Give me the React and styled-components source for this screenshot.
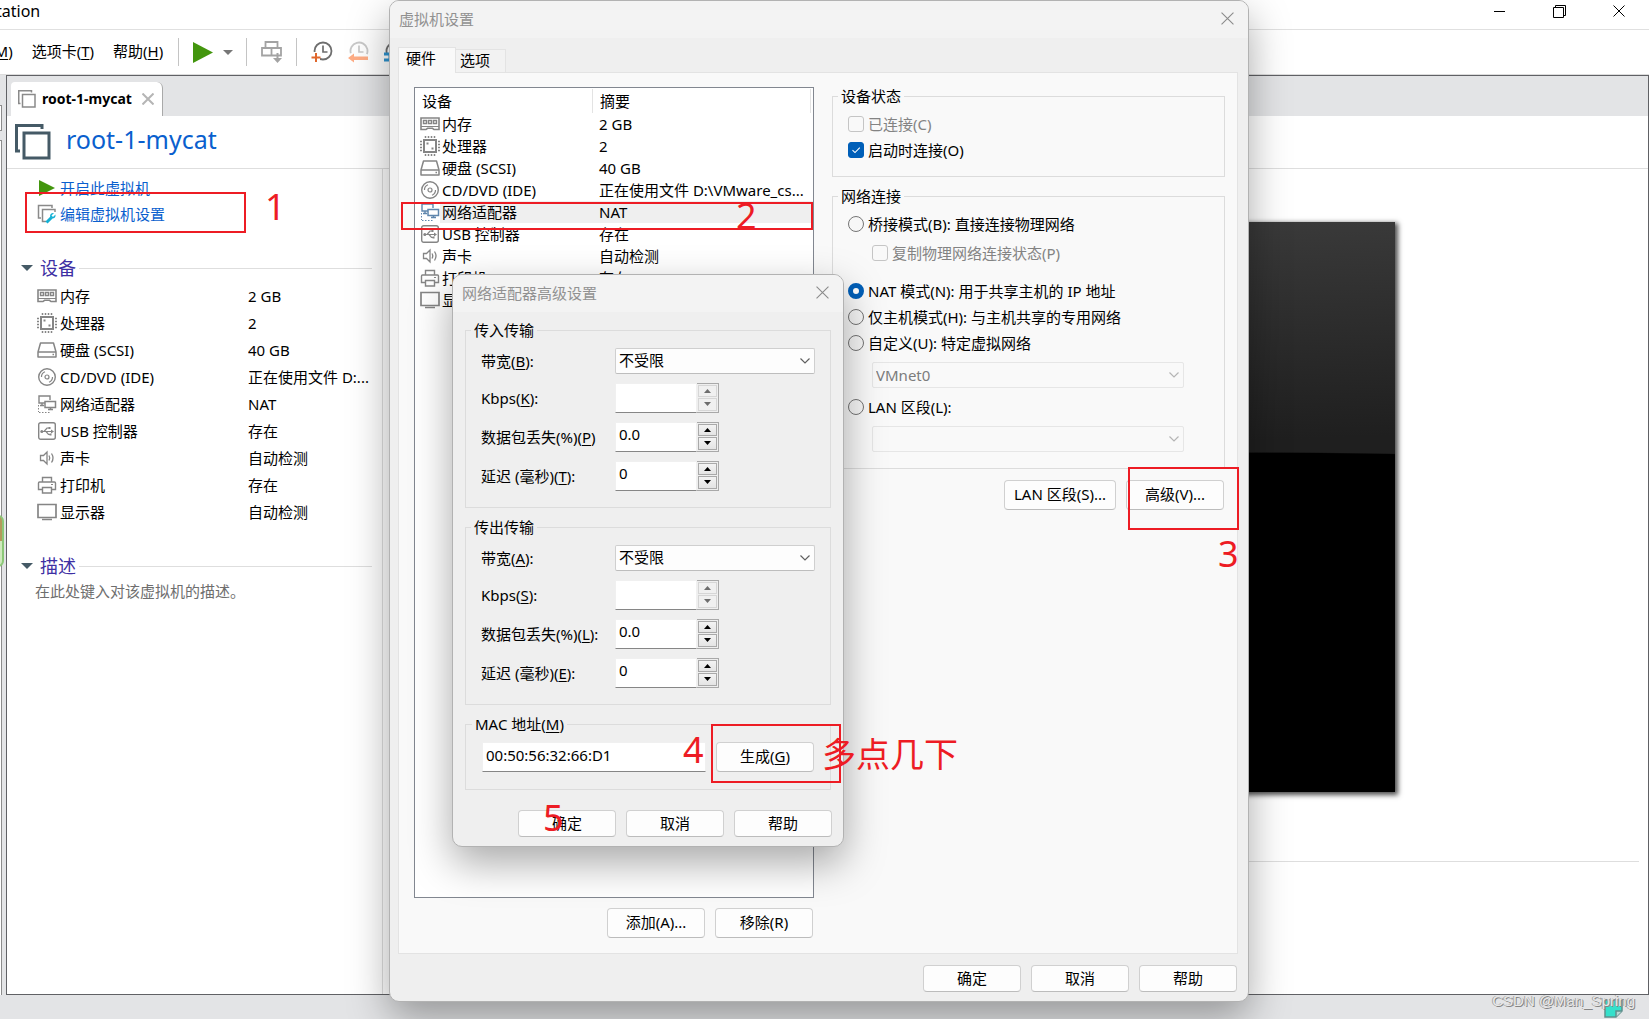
import React from 'react';
import styled, { createGlobalStyle, css } from 'styled-components';

const GlobalStyle = createGlobalStyle`
  * {
    box-sizing: border-box;
  }

  body {
    margin: 0;
    overflow: hidden;
    color: #000;
    font-family: 'Noto Sans', 'Noto Sans CJK SC', sans-serif;
    font-size: 15px;
    line-height: 20px;
  }

  button,
  input,
  select {
    font: inherit;
    color: inherit;
    margin: 0;
  }

  u {
    text-underline-offset: 2px;
  }
`;

/* ---------- main window ---------- */

const Desktop = styled.div`
  position: relative;
  display: flex;
  flex-direction: column;
  height: 100vh;
  background: #e3e4e6;
`;

const TitleBar = styled.header`
  display: flex;
  justify-content: space-between;
  align-items: flex-start;
  height: 30px;
  background: #fff;
  border-bottom: 1px solid #e0e0e0;
`;

const AppTitle = styled.h1`
  margin: 1px 0 0 -4px;
  font-size: 16px;
  font-weight: 400;
  line-height: 20px;
`;

const WindowControls = styled.div`
  display: flex;
  gap: 36px;
  padding: 0 18px 0 0;
`;

const BareButton = styled.button`
  display: flex;
  align-items: center;
  justify-content: center;
  padding: 0;
  border: 0;
  background: transparent;
`;

const WindowButton = styled(BareButton)`
  width: 24px;
  height: 22px;
`;

const MenuBar = styled.nav`
  display: flex;
  align-items: center;
  height: 45px;
  background: #fff;
  border-bottom: 1px solid #dcdcdc;
`;

const MenuItems = styled.div`
  display: flex;
  gap: 19px;
  margin-left: -10px;
  padding: 0 15px 2px 0;
`;

const MenuItem = styled.button`
  padding: 0;
  border: 0;
  background: transparent;
  white-space: nowrap;
`;

const ToolSeparator = styled.span`
  width: 1px;
  height: 28px;
  background: #c4c4c4;
`;

const ToolGroup = styled.div`
  display: flex;
  align-items: center;
  gap: ${({ $gap }) => $gap}px;
  padding: 0 13px 0 14px;
`;

const Workspace = styled.div`
  flex: 1;
  display: flex;
  min-height: 0;
`;

const Gutter = styled.aside`
  position: relative;
  display: flex;
  flex-direction: column;
  width: 6px;
`;

const GutterSlice = styled.div`
  width: 2px;
  height: ${({ $fill }) => ($fill ? 'auto' : '26px')};
  flex: ${({ $fill }) => ($fill ? 1 : 'none')};
  margin-top: ${({ $fill }) => ($fill ? 9 : 30)}px;
  background: #fff;
  border: 1px solid #8c8c8c;
  border-left: 0;
  border-bottom-width: ${({ $fill }) => ($fill ? 0 : 1)}px;
`;

const GutterBadge = styled.div`
  position: absolute;
  left: -8px;
  top: 440px;
  width: 12px;
  height: 52px;
  border: 2px solid #8cc878;
  border-radius: 6px;
  background: linear-gradient(#b39a5c 0 50%, #cfe9bd 50% 100%);
`;

const Panel = styled.main`
  flex: 1;
  display: flex;
  flex-direction: column;
  min-width: 0;
  background: #fff;
  border: 1px solid #606165;
`;

const TabStrip = styled.div`
  display: flex;
  align-items: flex-end;
  height: 40px;
  padding-left: 4px;
  background: #e3e4e6;
`;

const VmTab = styled.div`
  display: flex;
  align-items: center;
  height: 34px;
  padding: 0 8px 0 7px;
  gap: 6px;
  background: #fff;
  border-right: 1px solid #a9a9a9;
  border-radius: 4px 6px 0 0;
  font-size: 14px;
  font-weight: 700;
`;

const TabClose = styled(BareButton)`
  margin-left: 4px;
`;

const VmHeader = styled.div`
  display: flex;
  align-items: center;
  gap: 15px;
  height: 53px;
  padding-left: 8px;
  border-bottom: 1px solid #dedede;
`;

const VmName = styled.h2`
  margin: 0;
  padding-bottom: 6px;
  color: #0a5fce;
  font-size: 25px;
  font-weight: 400;
  line-height: 32px;
`;

const PanelBody = styled.div`
  flex: 1;
  display: flex;
  min-height: 0;
`;

const Summary = styled.section`
  width: 376px;
  padding: 6px 10px 0 14px;
  border-right: 1px solid #dedede;
`;

const Command = styled.a`
  display: flex;
  align-items: center;
  gap: 3px;
  height: 26px;
  padding-left: 16px;
  color: #0a5fce;
  text-decoration: none;
`;

const SectionTitle = styled.h3`
  display: flex;
  align-items: center;
  gap: 7px;
  margin: 0;
  color: #3d2fa3;
  font-size: 18px;
  font-weight: 400;
  line-height: 28px;

  &::after {
    content: '';
    flex: 1;
    height: 1px;
    margin-left: -4px;
    background: #dedede;
  }
`;

const Section = styled.div`
  margin-top: 27px;
`;

const VmTable = styled.table`
  width: 100%;
  border-collapse: collapse;
  table-layout: fixed;

  th,
  td {
    height: 27px;
    padding: 0;
    overflow: hidden;
    font-weight: 400;
    text-align: left;
    text-overflow: ellipsis;
    white-space: nowrap;
  }

  th {
    width: 227px;
    padding-left: 16px;
  }
`;

const DeviceName = styled.span`
  display: flex;
  align-items: center;
  gap: ${({ $gap }) => $gap}px;

  svg {
    flex: none;
  }
`;

const Description = styled.p`
  margin: 1px 0 0 14px;
  color: #6e6e6e;
  line-height: 20px;
`;

const PreviewPane = styled.section`
  flex: 1;
  display: flex;
  flex-direction: column;
  padding: 53px 9px 0 10px;
`;

const Preview = styled.div`
  height: 570px;
  margin: 0 244px 0 242px;
  background: radial-gradient(ellipse 900px 120px at 82% 350px, #000 99%, transparent 100%),
    linear-gradient(transparent 300px, #000 300px),
    linear-gradient(178deg, #3c3c3c, #1f1f1f 240px);
  box-shadow: 2px 2px 5px 1px rgba(0, 0, 0, 0.7);
`;

const PreviewRule = styled.hr`
  width: 100%;
  margin: 69px 0 0;
  border: 0;
  border-top: 1px solid #dedede;
`;

const StatusBar = styled.footer`
  display: flex;
  justify-content: flex-end;
  align-items: flex-start;
  height: 24px;
  padding: 4px 26px 0 0;
`;

/* ---------- dialogs ---------- */

const Dialog = styled.section`
  position: absolute;
  left: ${({ $left }) => $left}px;
  top: ${({ $top }) => $top}px;
  display: flex;
  flex-direction: column;
  width: ${({ $width }) => $width}px;
  background: #efefef;
  border: 1px solid #b2b2b2;
  border-radius: 10px;
  box-shadow: 0 16px 40px rgba(0, 0, 0, 0.34);
`;

const SettingsDialog = styled(Dialog)`
  bottom: 17px;
`;

const DialogTitle = styled.header`
  display: flex;
  align-items: center;
  justify-content: space-between;
  height: 37px;
  padding: 0 14px 2px 9px;
  background: #f3f3f3;
  border-radius: 9px 9px 0 0;
  color: #919191;

  h2 {
    margin: 0;
    font-size: 15px;
    font-weight: 400;
  }
`;

const DialogTabs = styled.div`
  display: flex;
  align-items: flex-end;
  padding: 9px 0 0 8px;
`;

const DialogTab = styled.button`
  display: flex;
  border: 1px solid #e3e3e3;
  border-bottom: 0;

  ${({ $active }) =>
    $active
      ? css`
          position: relative;
          height: 26px;
          width: 58px;
          margin-bottom: -1px;
          padding: 0 0 0 7px;
          background: #f9f9f9;
        `
      : css`
          height: 23px;
          width: 50px;
          padding: 0 0 0 4px;
          background: #f2f2f2;
          border-left: 0;
        `}
`;

const DialogPane = styled.div`
  flex: 1;
  display: flex;
  gap: 18px;
  min-height: 0;
  margin: 0 10px 0 8px;
  padding: 14px 12px 15px 15px;
  background: #f9f9f9;
  border: 1px solid #e3e3e3;
`;

const Hardware = styled.div`
  display: flex;
  flex-direction: column;
  width: 400px;
`;

const ListBox = styled.div`
  flex: 1;
  overflow: hidden;
  background: #fff;
  border: 1px solid #828790;
`;

const HardwareTable = styled.table`
  width: 100%;
  border-collapse: collapse;
  table-layout: fixed;

  th {
    height: 25px;
    padding: 0 0 0 7px;
    font-weight: 400;
    text-align: left;
    background: linear-gradient(#e3e3e3, #e3e3e3) no-repeat right 2px top 1px / 1px 24px;
  }

  th:first-child {
    width: 178px;
    background-position: right top 1px;
  }

  td {
    height: 22px;
    padding: 0 0 0 5px;
    overflow: hidden;
    text-overflow: ellipsis;
    white-space: nowrap;
  }

  td + td {
    padding: 0 9px 0 6px;
  }
`;

const HardwareRow = styled.tr`
  ${({ $selected }) =>
    $selected &&
    css`
      svg {
        color: #5f86ad;
      }

      td {
        background: linear-gradient(#efefef, #efefef) no-repeat 0 0 / 100% 100%;
      }

      td:first-child {
        background-position: 25px 0;
      }
    `}
`;

const ButtonRow = styled.div`
  display: flex;
  justify-content: flex-end;
  gap: 10px;
  padding: ${({ $pad }) => $pad};
`;

const Button = styled.button`
  min-width: 98px;
  height: ${({ $tall }) => ($tall ? 30 : 27)}px;
  padding: 0 9px 2px;
  background: #fdfdfd;
  border: 1px solid #d0d0d0;
  border-bottom-color: #bcbcbc;
  border-radius: 4px;
  white-space: nowrap;
`;

const Options = styled.div`
  flex: 1;
  display: flex;
  flex-direction: column;
`;

const Group = styled.fieldset`
  min-width: 0;
  margin: 0;
  padding: ${({ $pad }) => $pad};
  border: 1px solid #dcdcdc;

  legend {
    margin-left: -10px;
    padding: 0 3px;
    line-height: 18px;
  }

  & + & {
    margin-top: 10px;
  }
`;

const Choice = styled.label`
  display: flex;
  align-items: center;
  gap: 4px;
  height: 26px;
  margin: ${({ $margin }) => $margin || 0};
  color: ${({ $disabled }) => ($disabled ? '#838383' : '#000')};
  white-space: nowrap;
`;

const Check = styled.input`
  appearance: none;
  width: 16px;
  height: 16px;
  border: 1px solid #8a8a8a;
  border-radius: 3px;
  background: #f9f9f9;

  &:disabled {
    border-color: #c5c5c5;
  }

  &:checked {
    border-color: #005fb8;
    background: #005fb8
      url("data:image/svg+xml,%3Csvg xmlns='http://www.w3.org/2000/svg' viewBox='0 0 14 14'%3E%3Cpath d='M3.5 7.2 6 9.6l4.8-4.9' fill='none' stroke='%23fff' stroke-width='1.1'/%3E%3C/svg%3E");
  }
`;

const Radio = styled.input`
  appearance: none;
  width: 16px;
  height: 16px;
  border: 1px solid #757575;
  border-radius: 50%;
  background: #f7f7f7;

  &:checked {
    border: 5px solid #005fb8;
    background: #fff;
  }
`;

const SelectBox = styled.span`
  display: grid;
  align-items: center;
  width: ${({ $width }) => $width}px;
  height: 26px;
  margin-left: ${({ $indent }) => $indent || 0}px;

  select,
  svg {
    grid-area: 1 / 1;
  }

  svg {
    justify-self: end;
    margin-right: 5px;
    color: #606060;
    pointer-events: none;
  }

  select {
    appearance: none;
    width: 100%;
    height: 26px;
    padding: 0 3px 1px;
    background: #fdfdfd;
    border: 1px solid #cfcfcf;
    border-bottom-color: #bdbdbd;
    border-radius: 2px;
  }

  select:disabled {
    background: #f9f9f9;
    border-color: #e6e6e6;
    color: #7c7c7c;
    opacity: 1;
  }

  select:disabled + svg {
    color: #b5b5b5;
  }
`;

const Field = styled.div`
  display: grid;
  grid-template-columns: 134px auto;
  justify-content: start;
  align-items: center;
  height: ${({ $short }) => ($short ? 35 : 39)}px;

  label {
    white-space: nowrap;
  }
`;

const SpinBox = styled.span`
  display: flex;
  width: 104px;
  height: 30px;
`;

const TextInput = styled.input`
  flex: 1;
  min-width: 0;
  height: 30px;
  padding: 0 3px 5px;
  background: #fff;
  border: 1px solid #f0f0f0;
  border-bottom-color: #868686;
  outline: 0;
`;

const Arrows = styled.span`
  display: flex;
  flex-direction: column;
  gap: 1px;
  width: 22px;
  height: 30px;
  padding: 1px;
  border: 1px solid #a9a9a9;
  border-left: 0;
  background: #efefef;
`;

const ArrowButton = styled(BareButton)`
  flex: 1;
  border: 1px solid #a9a9a9;
  background: linear-gradient(#f3f3f3, #e4e4e4);

  &:disabled {
    border-color: #d6d6d6;
    background: #f0f0f0;
    color: #6d6d6d;
  }
`;

const MacRow = styled.div`
  display: flex;
  gap: 10px;
`;

const AdapterBody = styled.div`
  padding: 9px 12px 0;
`;

/* ---------- annotations drawn over the windows ---------- */

const Frame = styled.div`
  position: absolute;
  left: ${({ $x }) => $x}px;
  top: ${({ $y }) => $y}px;
  width: ${({ $w }) => $w}px;
  height: ${({ $h }) => $h}px;
  border: 2px solid #ed1c24;
  pointer-events: none;
`;

const Note = styled.span`
  position: absolute;
  left: ${({ $x }) => $x}px;
  top: ${({ $y }) => $y}px;
  color: #ed1c24;
  font-size: ${({ $size }) => $size || 36}px;
  line-height: 36px;
  white-space: nowrap;
  pointer-events: none;
`;

const Watermark = styled.span`
  position: absolute;
  right: 14px;
  bottom: 8px;
  color: #e8e8e8;
  font-family: 'Liberation Sans', sans-serif;
  font-size: 15px;
  text-shadow: 1px 1px 0 #858585, -1px 0 0 #a8a8a8;
`;

/* ---------- icons ---------- */

const Icon = ({ children, size = 20 }) => (
  <svg width={size} height={size} viewBox={`0 0 ${size} ${size}`} fill="none" stroke="currentColor" aria-hidden="true">
    {children}
  </svg>
);

const DeviceSvg = styled.svg`
  color: #858585;
`;

const deviceShapes = {
  memory: (
    <>
      <path d="M1 4h18v11.500h-5l-1.500-1.200h-5L6 15.500H1z" strokeWidth="1.600" />
      <path d="M3.500 6.500h3v3h-3zM8.500 6.500h3v3h-3zM13.500 6.500h3v3h-3z" strokeWidth="1.400" />
      <path d="M1 12.500h18" />
    </>
  ),
  cpu: (
    <>
      <path d="M4 4h12v12H4z" strokeWidth="2" />
      <path
        d="M5.500 0v2M8.500 0v2M11.500 0v2M14.500 0v2M5.500 18v2M8.500 18v2M11.500 18v2M14.500 18v2M0 5.500h2M0 8.500h2M0 11.500h2M0 14.500h2M18 5.500h2M18 8.500h2M18 11.500h2M18 14.500h2"
        strokeWidth="1.500"
      />
      <path d="M6.500 7.500h2M11.500 12.500h2" strokeWidth="2" />
    </>
  ),
  disk: (
    <>
      <path d="M1 12 3.500 3h13L19 12v5H1z" strokeWidth="1.500" strokeLinejoin="round" />
      <path d="M1 12h18M15.500 14.500h1.500" strokeWidth="1.500" />
    </>
  ),
  disc: (
    <>
      <circle cx="10" cy="10" r="8.300" strokeWidth="1.400" />
      <circle cx="10" cy="10" r="2" strokeWidth="1.200" />
      <path d="M4.500 10A5.500 5.500 0 0 1 8 4.800M15.500 10a5.500 5.500 0 0 1-3.500 5.200" strokeWidth="1.200" />
    </>
  ),
  network: (
    <>
      <path d="M8 9H2V2h11v4" strokeWidth="1.400" />
      <path d="M8 7.500h10.500v6H8zM11 15.500h5M13.500 13.500v2" strokeWidth="1.500" />
      <path d="M5 9v3M3 11.500h4" strokeWidth="1.400" />
      <path d="M1.500 11v7M2 18.500h11" strokeDasharray="1.500 1.500" />
    </>
  ),
  usb: (
    <>
      <rect x="1.700" y="1.700" width="16.600" height="16.600" rx="2" strokeWidth="1.400" />
      <path d="M5 10.500h10M7 10.500l3-3.500h2M9 10.500l2.500 3H13" strokeWidth="1.200" />
      <path d="m14 8.500 3 2-3 2z" fill="currentColor" stroke="none" />
      <circle cx="4.800" cy="10.500" r="1.500" fill="currentColor" stroke="none" />
      <path d="M11.500 6h2v2h-2zM12.500 12.500h2v2h-2z" fill="currentColor" stroke="none" />
    </>
  ),
  sound: (
    <>
      <path d="M3.500 7.500h3L10 4v12l-3.500-3.500h-3z" strokeWidth="1.300" />
      <path d="M12 7.500q1.500 2.500 0 5M14.500 5.500q3 4.500 0 9" strokeWidth="1.300" />
    </>
  ),
  printer: (
    <>
      <path d="M5.500 7V2.500h9V7M5.500 14.500h-4V8q0-1 1-1h15q1 0 1 1v6.500h-4" strokeWidth="1.400" />
      <path d="M5.500 12.500h9v5.500h-9z" strokeWidth="1.400" />
      <path d="M14 9.500h2" />
    </>
  ),
  display: (
    <>
      <path d="M1 2.500h18v13H1z" strokeWidth="1.700" />
      <path d="M5 17.500h10" strokeWidth="1.500" />
    </>
  ),
};

const DeviceIcon = ({ name }) => (
  <DeviceSvg width="20" height="20" viewBox="0 0 20 20" fill="none" stroke="currentColor" aria-hidden="true">
    {deviceShapes[name]}
  </DeviceSvg>
);

const CloseIcon = ({ size = 12, color = 'currentColor', width = 1 }) => (
  <svg width={size} height={size} viewBox="0 0 12 12" stroke={color} strokeWidth={width} aria-hidden="true">
    <path d="m.5.5 11 11M11.500.5l-11 11" />
  </svg>
);

const Chevron = () => (
  <svg width="10" height="6" viewBox="0 0 10 6" fill="none" stroke="currentColor" strokeWidth="1.200" aria-hidden="true">
    <path d="m.5.5 4.500 4.500L9.500.5" />
  </svg>
);

const Triangle = ({ up, width = 7, height = 4, color = 'currentColor' }) => (
  <svg width={width} height={height} viewBox="0 0 8 4" preserveAspectRatio="none" fill={color} aria-hidden="true">
    <path d={up ? 'M0 4h8L4 0z' : 'M0 0h8L4 4z'} />
  </svg>
);

const VmIcon = ({ size, color, width }) => (
  <svg width={size} height={size} viewBox="0 0 36 36" fill="none" stroke={color} strokeWidth={width} aria-hidden="true">
    <path d="M5 27H1.500V1.500H27V5M9 9h25v25H9z" />
  </svg>
);

const PlayIcon = ({ width, height }) => (
  <svg width={width} height={height} viewBox="0 0 20 21" fill="#43960e" aria-hidden="true">
    <path d="M0 0v21l20-10.500z" />
  </svg>
);

const EditVmIcon = () => (
  <Icon>
    <path d="M4 14H1.500V1.500H15V4" stroke="#8a8a8a" strokeWidth="1.500" />
    <path d="M9 17.500H5.500v-12H18V8" stroke="#8a8a8a" strokeWidth="1.500" />
    <path d="m9.500 18.500 5-5" stroke="#12b0d4" strokeWidth="3" />
    <path d="M18.500 10.500 16 13l-1.500-1.500L17 9q-4-.5-4 3.500l2 2q4 0 3.500-4z" fill="#12b0d4" stroke="none" />
  </Icon>
);

const ClockIcon = ({ variant }) => (
  <Icon size={22}>
    <circle
      cx="12"
      cy="10"
      r="8.500"
      stroke={variant === 'revert' ? '#c9c9c9' : '#6e6e6e'}
      strokeWidth="1.800"
      strokeDasharray={variant === 'take' ? undefined : '32 22'}
      transform={variant === 'take' ? undefined : 'rotate(165 12 10)'}
    />
    <path d="M12 4.500V11h4.500" stroke={variant === 'revert' ? '#c9c9c9' : '#6e6e6e'} strokeWidth="1.700" />
    {variant === 'take' && (
      <>
        <path d="M0 11h9v10H0z" fill="#fff" stroke="none" />
        <path d="M5 12v9M.5 16.500h9" stroke="#e0672c" strokeWidth="2" />
      </>
    )}
    {variant === 'revert' && <path d="M7 12.500v3h14v3.500H7v2.500L1 17z" fill="#ffad85" stroke="none" />}
    {variant === 'manage' && <path d="M1 13h8M1 19h8M7 13v6" stroke="#2e94d0" strokeWidth="3" />}
  </Icon>
);

const SnapshotIcon = () => (
  <Icon size={22}>
    <path d="M4.500 1h12v6h-12zM1 7h9.500v7.500H1zM10.500 7H20v7.500h-9.500" stroke="#a3a3a3" strokeWidth="1.800" />
    <path d="M16.500 12v6" stroke="#a3a3a3" strokeWidth="2" />
    <path d="M12 17h9l-4.500 5z" fill="#a3a3a3" stroke="none" />
  </Icon>
);

const NoteIcon = () => (
  <Icon size={19}>
    <path d="M1 1h17v11l-6 6H1z" fill="#35e0cb" stroke="#5f8f8c" strokeWidth="1.500" />
    <path d="M12 18v-6h6" fill="#b7d9d5" stroke="#5f8f8c" strokeWidth="1.500" />
  </Icon>
);

/* ---------- data ---------- */

const devices = [
  { icon: 'memory', name: '内存', value: '2 GB' },
  { icon: 'cpu', name: '处理器', value: '2' },
  { icon: 'disk', name: '硬盘 (SCSI)', value: '40 GB' },
  { icon: 'disc', name: 'CD/DVD (IDE)', value: '正在使用文件 D:\\VMware_cs...', short: '正在使用文件 D:...' },
  { icon: 'network', name: '网络适配器', value: 'NAT', selected: true },
  { icon: 'usb', name: 'USB 控制器', value: '存在' },
  { icon: 'sound', name: '声卡', value: '自动检测' },
  { icon: 'printer', name: '打印机', value: '存在' },
  { icon: 'display', name: '显示器', value: '自动检测' },
];

const transfers = [
  { id: 'in', title: '传入传输', keys: ['B', 'K', 'P', 'T'], lossSuffix: '' },
  { id: 'out', title: '传出传输', keys: ['A', 'S', 'L', 'E'], lossSuffix: ':' },
];

const frames = [
  { x: 25, y: 192, w: 221, h: 41 },
  { x: 401, y: 202, w: 412, h: 28 },
  { x: 1128, y: 467, w: 111, h: 63 },
  { x: 711, y: 724, w: 130, h: 59 },
];

const notes = [
  { text: '1', x: 265, y: 189 },
  { text: '2', x: 736, y: 198 },
  { text: '3', x: 1218, y: 536 },
  { text: '4', x: 683, y: 732 },
  { text: '5', x: 543, y: 800 },
  { text: '多点几下', x: 822, y: 736, size: 34 },
];

/* ---------- parts ---------- */

const Spin = ({ id, value, disabled }) => (
  <SpinBox>
    <TextInput id={id} type="text" defaultValue={value} disabled={disabled} />
    <Arrows>
      <ArrowButton type="button" aria-label="增加" disabled={disabled}>
        <Triangle up />
      </ArrowButton>
      <ArrowButton type="button" aria-label="减少" disabled={disabled}>
        <Triangle />
      </ArrowButton>
    </Arrows>
  </SpinBox>
);

const Transfer = ({ id, title, keys, lossSuffix }) => (
  <Group $pad="4px 15px 12px">
    <legend>{title}</legend>
    <Field $short>
      <label htmlFor={`${id}-bandwidth`}>
        带宽(<u>{keys[0]}</u>):
      </label>
      <SelectBox $width={200}>
        <select id={`${id}-bandwidth`}>
          <option>不受限</option>
        </select>
        <Chevron />
      </SelectBox>
    </Field>
    <Field>
      <label htmlFor={`${id}-kbps`}>
        Kbps(<u>{keys[1]}</u>):
      </label>
      <Spin id={`${id}-kbps`} value="" disabled />
    </Field>
    <Field>
      <label htmlFor={`${id}-loss`}>
        数据包丢失(%)(<u>{keys[2]}</u>){lossSuffix}
      </label>
      <Spin id={`${id}-loss`} value="0.0" />
    </Field>
    <Field>
      <label htmlFor={`${id}-delay`}>
        延迟 (毫秒)(<u>{keys[3]}</u>):
      </label>
      <Spin id={`${id}-delay`} value="0" />
    </Field>
  </Group>
);

const MainWindow = () => (
  <>
    <TitleBar>
      <AppTitle>tation</AppTitle>
      <WindowControls>
        <WindowButton type="button" aria-label="最小化">
          <svg width="11" height="11" stroke="#000"><path d="M0 5.500h11" /></svg>
        </WindowButton>
        <WindowButton type="button" aria-label="还原">
          <svg width="13" height="13" fill="none" stroke="#000"><path d="M.5 2.500h10v10H.5zM2.500 2V.5h10v10H11" /></svg>
        </WindowButton>
        <WindowButton type="button" aria-label="关闭">
          <CloseIcon />
        </WindowButton>
      </WindowControls>
    </TitleBar>
    <MenuBar>
      <MenuItems>
        <MenuItem type="button">(<u>M</u>)</MenuItem>
        <MenuItem type="button">选项卡(<u>T</u>)</MenuItem>
        <MenuItem type="button">帮助(<u>H</u>)</MenuItem>
      </MenuItems>
      <ToolSeparator />
      <ToolGroup $gap={10}>
        <BareButton type="button" aria-label="开机"><PlayIcon width={20} height={21} /></BareButton>
        <BareButton type="button" aria-label="电源选项"><Triangle width={10} height={5} color="#777" /></BareButton>
      </ToolGroup>
      <ToolSeparator />
      <ToolGroup $gap={0}>
        <BareButton type="button" aria-label="发送"><SnapshotIcon /></BareButton>
      </ToolGroup>
      <ToolSeparator />
      <ToolGroup $gap={14}>
        <BareButton type="button" aria-label="拍摄快照"><ClockIcon variant="take" /></BareButton>
        <BareButton type="button" aria-label="恢复快照"><ClockIcon variant="revert" /></BareButton>
        <BareButton type="button" aria-label="管理快照"><ClockIcon variant="manage" /></BareButton>
      </ToolGroup>
    </MenuBar>
    <Workspace>
      <Gutter>
        <GutterSlice />
        <GutterSlice $fill />
        <GutterBadge />
      </Gutter>
      <Panel>
        <TabStrip>
          <VmTab>
            <VmIcon size={18} color="#8a8a8a" width={3} />
            root-1-mycat
            <TabClose type="button" aria-label="关闭选项卡">
              <CloseIcon color="#b5b5b5" width={2} />
            </TabClose>
          </VmTab>
        </TabStrip>
        <VmHeader>
          <VmIcon size={36} color="#455a66" width={3} />
          <VmName>root-1-mycat</VmName>
        </VmHeader>
        <PanelBody>
          <Summary>
            <Command href="#start">
              <Icon>
                <path d="M2 2v16l16-8z" fill="#43960e" stroke="none" />
              </Icon>
              开启此虚拟机
            </Command>
            <Command href="#edit">
              <EditVmIcon />
              编辑虚拟机设置
            </Command>
            <Section>
              <SectionTitle>
                <Triangle width={12} height={6} color="#455a66" />
                设备
              </SectionTitle>
              <VmTable>
                <tbody>
                  {devices.map((device) => (
                    <tr key={device.icon}>
                      <th scope="row">
                        <DeviceName $gap={3}>
                          <DeviceIcon name={device.icon} />
                          {device.name}
                        </DeviceName>
                      </th>
                      <td>{device.short || device.value}</td>
                    </tr>
                  ))}
                </tbody>
              </VmTable>
            </Section>
            <Section>
              <SectionTitle>
                <Triangle width={12} height={6} color="#455a66" />
                描述
              </SectionTitle>
              <Description>在此处键入对该虚拟机的描述。</Description>
            </Section>
          </Summary>
          <PreviewPane>
            <Preview />
            <PreviewRule />
          </PreviewPane>
        </PanelBody>
      </Panel>
    </Workspace>
    <StatusBar>
      <NoteIcon />
    </StatusBar>
  </>
);

const VmSettings = () => (
  <SettingsDialog role="dialog" aria-label="虚拟机设置" $left={389} $top={0} $width={860}>
    <DialogTitle>
      <h2>虚拟机设置</h2>
      <BareButton type="button" aria-label="关闭"><CloseIcon size={13} color="#8a8a8a" /></BareButton>
    </DialogTitle>
    <DialogTabs>
      <DialogTab type="button" $active>硬件</DialogTab>
      <DialogTab type="button">选项</DialogTab>
    </DialogTabs>
    <DialogPane>
      <Hardware>
        <ListBox>
          <HardwareTable>
            <thead>
              <tr>
                <th>设备</th>
                <th>摘要</th>
              </tr>
            </thead>
            <tbody>
              {devices.map((device) => (
                <HardwareRow key={device.icon} $selected={device.selected}>
                  <td>
                    <DeviceName $gap={2}>
                      <DeviceIcon name={device.icon} />
                      {device.name}
                    </DeviceName>
                  </td>
                  <td>{device.value}</td>
                </HardwareRow>
              ))}
            </tbody>
          </HardwareTable>
        </ListBox>
        <ButtonRow $pad="10px 1px 0 0">
          <Button type="button" $tall>添加(A)...</Button>
          <Button type="button" $tall>移除(R)</Button>
        </ButtonRow>
      </Hardware>
      <Options>
        <Group $pad="6px 15px 13px">
          <legend>设备状态</legend>
          <Choice $disabled>
            <Check type="checkbox" disabled />
            已连接(C)
          </Choice>
          <Choice>
            <Check type="checkbox" defaultChecked />
            启动时连接(O)
          </Choice>
        </Group>
        <Group $pad="6px 15px 16px">
          <legend>网络连接</legend>
          <Choice>
            <Radio type="radio" name="network" />
            桥接模式(B): 直接连接物理网络
          </Choice>
          <Choice $disabled $margin="3px 0 12px 24px">
            <Check type="checkbox" disabled />
            复制物理网络连接状态(P)
          </Choice>
          <Choice>
            <Radio type="radio" name="network" defaultChecked />
            NAT 模式(N): 用于共享主机的 IP 地址
          </Choice>
          <Choice>
            <Radio type="radio" name="network" />
            仅主机模式(H): 与主机共享的专用网络
          </Choice>
          <Choice $margin="0 0 6px">
            <Radio type="radio" name="network" />
            自定义(U): 特定虚拟网络
          </Choice>
          <SelectBox $width={312} $indent={24}>
            <select aria-label="特定虚拟网络" disabled>
              <option>VMnet0</option>
            </select>
            <Chevron />
          </SelectBox>
          <Choice $margin="6px 0">
            <Radio type="radio" name="network" />
            LAN 区段(L):
          </Choice>
          <SelectBox $width={312} $indent={24}>
            <select aria-label="LAN 区段" disabled>
              <option></option>
            </select>
            <Chevron />
          </SelectBox>
        </Group>
        <ButtonRow $pad="11px 1px 0 0">
          <Button type="button" $tall>LAN 区段(S)...</Button>
          <Button type="button" $tall>高级(V)...</Button>
        </ButtonRow>
      </Options>
    </DialogPane>
    <ButtonRow $pad="11px 11px 9px">
      <Button type="button">确定</Button>
      <Button type="button">取消</Button>
      <Button type="button">帮助</Button>
    </ButtonRow>
  </SettingsDialog>
);

const AdapterSettings = () => (
  <Dialog role="dialog" aria-label="网络适配器高级设置" $left={452} $top={274} $width={392}>
    <DialogTitle>
      <h2>网络适配器高级设置</h2>
      <BareButton type="button" aria-label="关闭"><CloseIcon size={13} color="#8a8a8a" /></BareButton>
    </DialogTitle>
    <AdapterBody>
      {transfers.map((transfer) => (
        <Transfer key={transfer.id} {...transfer} />
      ))}
      <Group $pad="9px 16px 17px">
        <legend>
          <label htmlFor="mac">
            MAC 地址(<u>M</u>)
          </label>
        </legend>
        <MacRow>
          <TextInput id="mac" type="text" defaultValue="00:50:56:32:66:D1" />
          <Button type="button" $tall>
            生成(<u>G</u>)
          </Button>
        </MacRow>
      </Group>
    </AdapterBody>
    <ButtonRow $pad="20px 11px 9px">
      <Button type="button">确定</Button>
      <Button type="button">取消</Button>
      <Button type="button">帮助</Button>
    </ButtonRow>
  </Dialog>
);

const App = () => (
  <>
    <GlobalStyle />
    <Desktop>
      <MainWindow />
      <VmSettings />
      <AdapterSettings />
      {frames.map(({ x, y, w, h }) => (
        <Frame key={`${x}-${y}`} $x={x} $y={y} $w={w} $h={h} />
      ))}
      {notes.map(({ text, x, y, size }) => (
        <Note key={text} $x={x} $y={y} $size={size}>
          {text}
        </Note>
      ))}
      <Watermark>CSDN @Man_Spring</Watermark>
    </Desktop>
  </>
);

export default App;
